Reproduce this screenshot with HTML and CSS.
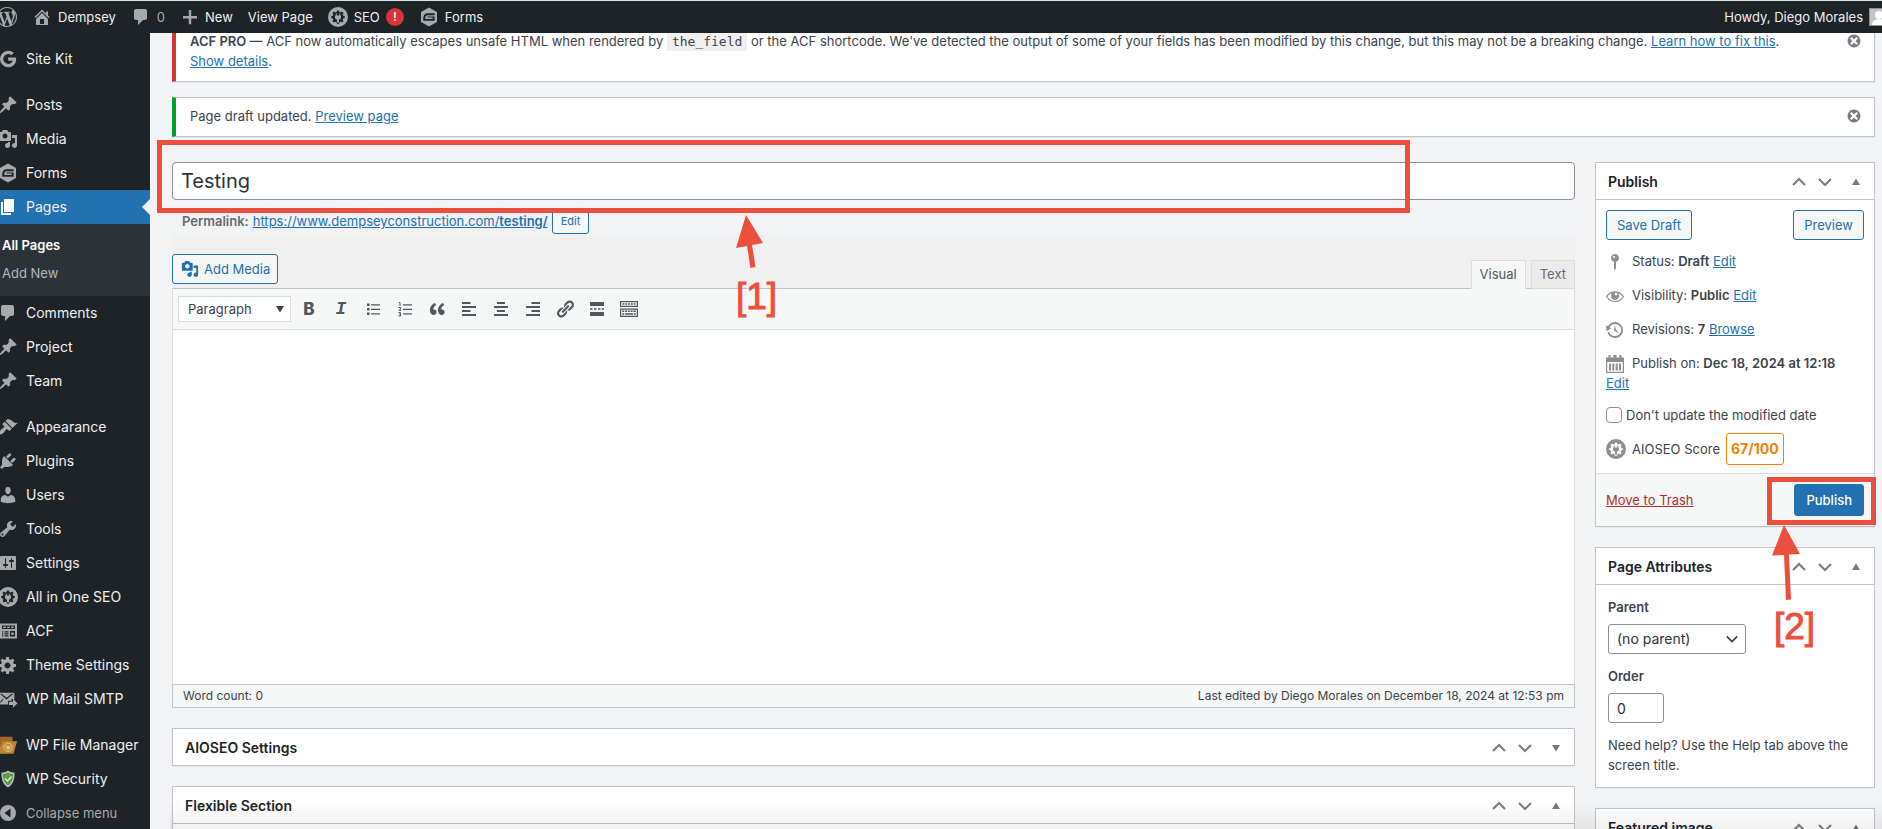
FILE: index.html
```html
<!DOCTYPE html>
<html lang="en">
<head>
<meta charset="utf-8">
<title>Edit Page - Dempsey</title>
<link rel="stylesheet" href="styles.css">
</head>
<body>
<svg class="sprite" aria-hidden="true">
  <symbol id="i-wp" viewBox="0 0 20 20"><path d="M20 10c0-5.51-4.49-10-10-10C4.48 0 0 4.49 0 10c0 5.52 4.48 10 10 10 5.51 0 10-4.48 10-10zM7.78 15.37L4.37 6.22c.55-.02 1.17-.08 1.17-.08.5-.06.44-1.13-.06-1.11 0 0-1.45.11-2.37.11-.18 0-.37 0-.58-.01C4.12 2.69 6.87 1.11 10 1.11c2.33 0 4.45.87 6.05 2.34-.68-.11-1.65.39-1.65 1.58 0 .74.45 1.36.9 2.1.35.61.55 1.36.55 2.46 0 1.49-1.4 5-1.4 5l-3.03-8.37c.54-.02.82-.17.82-.17.5-.05.44-1.25-.06-1.22 0 0-1.44.12-2.38.12-.87 0-2.33-.12-2.33-.12-.5-.03-.56 1.2-.06 1.22l.92.08 1.26 3.41zM17.41 10c.24-.64.74-1.87.43-4.25.7 1.29 1.05 2.71 1.05 4.25 0 3.29-1.73 6.24-4.4 7.78.97-2.59 1.94-5.2 2.92-7.78zM6.1 18.09C3.12 16.65 1.11 13.53 1.11 10c0-1.3.23-2.48.72-3.59C3.25 10.3 4.67 14.2 6.1 18.09zm4.03-6.63l2.58 6.98c-.86.29-1.76.45-2.71.45-.79 0-1.57-.11-2.29-.33.81-2.38 1.62-4.74 2.42-7.1z"/></symbol>
  <symbol id="i-home" viewBox="0 0 20 20"><path d="M16 8.5l1.53 1.53-1.06 1.06L10 4.6l-6.47 6.49-1.06-1.06L10 2.5l4 4v-2h2v4zm-6-2.46l6 5.99V18H4v-5.97zM12 17v-5H8v5h4z"/></symbol>
  <symbol id="i-comment" viewBox="0 0 20 20"><path d="M5 2h9c1.1 0 2 .9 2 2v7c0 1.1-.9 2-2 2h-2l-5 5v-5H5c-1.1 0-2-.9-2-2V4c0-1.1.9-2 2-2z"/></symbol>
  <symbol id="i-plus" viewBox="0 0 20 20"><path d="M17 9v2.400h-5.800v5.800H8.800v-5.800H3V9h5.800V3h2.400v6z"/></symbol>
  <symbol id="i-seo" viewBox="0 0 20 20"><path fill-rule="evenodd" d="M10 0a10 10 0 1 0 0 20 10 10 0 0 0 0-20zM9 3.400h2l.4 1.500 1.300.5 1.400-.8 1.400 1.400-.8 1.400.5 1.300 1.500.4v2l-1.500.4-.5 1.300.8 1.400-1.400 1.400-1.400-.8-1.300.5-.4 1.500H9l-.4-1.500-1.300-.5-1.400.8-1.400-1.400.8-1.400-.5-1.300-1.500-.4v-2l1.500-.4.5-1.300-.8-1.400 1.400-1.400 1.400.8 1.300-.5z"/><path d="M7.800 6.500h1v2h2.400v-2h1v2h.8v1.800c0 1.300-.8 2.100-2 2.400V15.500H9V12.700c-1.200-.3-2-1.100-2-2.400V8.500h.8z"/></symbol>
  <symbol id="i-gform" viewBox="0 0 20 20"><path fill-rule="evenodd" d="M10 .6l8 4.400v10l-8 4.400-8-4.400V5zM8.500 6.200c-2.700 0-4.300 2-4.300 5.500v2h11.400V9.400h-1.900v2.500H6.200c.1-2.400.8-3.700 2.400-3.700h7V6.200zM8.600 9.400h5.100v1H8.600z"/></symbol>
  <symbol id="i-google" viewBox="0 0 20 20"><path d="M18.100 8.400H10.200v3.400h4.500c-.5 2-2.100 3.100-4.500 3.100a4.900 4.900 0 1 1 3.200-8.600l2.500-2.500A8.300 8.300 0 1 0 10.200 18.300c4.900 0 8.500-3.500 7.900-9.900z"/></symbol>
  <symbol id="i-pin" viewBox="0 0 20 20"><path d="M10.44 3.02l1.82-1.82 6.36 6.35-1.83 1.82c-1.05-.68-2.48-.57-3.41.36l-.75.75c-.92.93-1.04 2.35-.35 3.41l-1.83 1.82-2.41-2.41-2.8 2.79c-.42.42-3.38 2.71-3.8 2.29s1.86-3.39 2.28-3.81l2.79-2.79L4.100 9.360l1.83-1.82c1.05.69 2.48.57 3.4-.36l.75-.75c.93-.92 1.05-2.35.36-3.41z"/></symbol>
  <symbol id="i-media" viewBox="0 0 20 20"><path fill-rule="evenodd" d="M13 11V4c0-.55-.45-1-1-1h-1.670L9 1H5L3.670 3H2c-.55 0-1 .45-1 1v7c0 .55.45 1 1 1h10c.55 0 1-.45 1-1zM7 4.500c1.380 0 2.500 1.120 2.500 2.500S8.380 9.500 7 9.500 4.500 8.380 4.500 7 5.620 4.500 7 4.500z"/><path d="M14 6h5v10.500c0 1.380-1.120 2.500-2.500 2.500S14 17.880 14 16.500s1.120-2.500 2.500-2.500c.17 0 .34.02.5.05V9h-3V6zm-4 8.050V13h2v3.500c0 1.380-1.120 2.500-2.500 2.500S7 17.880 7 16.500 8.120 14 9.500 14c.17 0 .34.02.5.05z"/></symbol>
  <symbol id="i-page" viewBox="0 0 20 20"><path d="M6 15V2h10v13H6zm-1 1h8v2H3V5h2v11z"/></symbol>
  <symbol id="i-brush" viewBox="0 0 20 20"><path d="M14.480 11.060L7.410 3.990l1.500-1.500c.5-.56 2.300-.47 3.510.32 1.210.8 1.430 1.280 2.910 2.100 1.180.64 2.450 1.260 4.450.85zm-.71.71L6.700 4.700 4.930 6.470c-.39.39-.39 1.020 0 1.410l1.060 1.060c.39.39.39 1.030 0 1.420-.6.6-1.430 1.110-2.210 1.690-.35.26-.7.53-1.010.84C1.430 14.230.4 16.080 1.400 17.070c.99 1 2.840-.03 4.180-1.360.31-.31.58-.66.85-1.020.57-.78 1.080-1.610 1.690-2.210.39-.39 1.020-.39 1.410 0l1.060 1.060c.39.39 1.020.39 1.410 0z"/></symbol>
  <symbol id="i-plug" viewBox="0 0 20 20"><path d="M13.110 4.360L9.870 7.600 8 5.730l3.240-3.240c.35-.34 1.050-.2 1.560.32.52.51.66 1.210.31 1.550zm-8 1.770l.91-1.120 9.010 9.010-1.190.84c-.71.71-2.630 1.160-3.820 1.160H6.140L4.900 17.260c-.59.59-1.540.59-2.120 0-.59-.58-.59-1.530 0-2.120l1.240-1.240v-3.880c0-1.130.4-3.190 1.090-3.890zm7.260 3.970l3.240-3.240c.34-.35 1.040-.21 1.550.31.52.51.66 1.210.31 1.550l-3.240 3.250z"/></symbol>
  <symbol id="i-user" viewBox="0 0 20 20"><path d="M10 9.250c-2.270 0-2.730-3.440-2.730-3.440C7 4.020 7.820 2 9.970 2c2.160 0 2.980 2.020 2.710 3.810 0 0-.41 3.440-2.680 3.440zm0 2.570L12.720 10c2.390 0 4.520 2.330 4.520 4.530v2.490s-3.650 1.130-7.240 1.130c-3.650 0-7.240-1.130-7.240-1.130v-2.490c0-2.250 1.940-4.480 4.470-4.480z"/></symbol>
  <symbol id="i-tool" viewBox="0 0 20 20"><path fill-rule="evenodd" d="M16.680 9.770c-1.340 1.340-3.300 1.670-4.950.99l-5.410 6.520c-.99.99-2.590.99-3.580 0s-.99-2.590 0-3.570l6.520-5.420c-.68-1.650-.35-3.610.99-4.950 1.280-1.280 3.120-1.620 4.720-1.060l-2.890 2.890 2.820 2.820 2.860-2.870c.53 1.580.18 3.390-1.080 4.650zM3.810 16.210c.4.39 1.040.39 1.430 0 .4-.4.4-1.040 0-1.430-.39-.4-1.030-.4-1.430 0-.39.39-.39 1.030 0 1.430z"/></symbol>
  <symbol id="i-sliders" viewBox="0 0 20 20"><path fill-rule="evenodd" d="M18 16V4c0-.55-.45-1-1-1H3c-.55 0-1 .45-1 1v12c0 .55.45 1 1 1h14c.55 0 1-.45 1-1zM8 11h1c.55 0 1 .45 1 1s-.45 1-1 1H8v1.500c0 .28-.22.5-.5.5s-.5-.22-.5-.5V13H6c-.55 0-1-.45-1-1s.45-1 1-1h1V5.500c0-.28.22-.5.5-.5s.5.22.5.5V11zm5-2h-1c-.55 0-1-.45-1-1s.45-1 1-1h1V5.500c0-.28.22-.5.5-.5s.5.22.5.5V7h1c.55 0 1 .45 1 1s-.45 1-1 1h-1v5.500c0 .28-.22.5-.5.5s-.5-.22-.5-.5V9z"/></symbol>
  <symbol id="i-acf" viewBox="0 0 20 20"><path fill-rule="evenodd" d="M2 2.500h17v15H2zM4 4.500v3.600h13V4.500zM12 10v5.500h5V10zM4 10.200v1.300h1.300v-1.300zm2.500 0v1.300H10.500v-1.300zM4 12.200v1.300h1.300v-1.300zm2.500 0v1.300H10.500v-1.300zM4 14.200v1.300h1.300v-1.300zm2.500 0v1.300H10.500v-1.300z"/><path d="M5.200 5.500h2.600v1.600H5.200zM9.200 5.500h2.600v1.600H9.200zM13.200 5.500h2.600v1.600h-2.600zM13.300 11.400h2.400v2.700h-2.400z"/></symbol>
  <symbol id="i-gear" viewBox="0 0 20 20"><path fill-rule="evenodd" d="M18 12h-2.180c-.17.7-.44 1.350-.81 1.930l1.540 1.540-2.100 2.100-1.540-1.540c-.58.36-1.230.63-1.910.79V19H8v-2.180c-.68-.16-1.330-.43-1.910-.79l-1.540 1.540-2.120-2.120 1.540-1.540c-.36-.58-.63-1.230-.79-1.910H1V9.030h2.170c.16-.7.44-1.350.8-1.940L2.430 5.550l2.100-2.100 1.540 1.540c.58-.37 1.240-.64 1.930-.81V2h3v2.180c.68.16 1.330.43 1.910.79l1.540-1.540 2.120 2.120-1.540 1.540c.36.59.64 1.240.8 1.940H18V12zm-8.500 1.500c1.660 0 3-1.340 3-3s-1.340-3-3-3-3 1.340-3 3 1.340 3 3 3z"/></symbol>
  <symbol id="i-mail" viewBox="0 0 22 20"><path fill-rule="evenodd" d="M1 3h17v8l-3-1.500v2.500h-4v4H1zM2.600 4.800l6.900 5.700 6.900-5.700-.9-.8-6 4.500L3.500 4zM2.500 14.500l3.500-4-.8-.7-2.700 3.200z"/><path d="M12 13h4.500v-3l5 4.800-5 4.700v-3H12z"/></symbol>
  <symbol id="i-folder" viewBox="0 0 22 20"><path fill="#a8642a" d="M0 1h16v4l-5 14H0z"/><path fill="#bd862c" d="M5 6h16l-4 13.500H0V17z"/><circle cx="11" cy="12.500" r="4.500" fill="none" stroke="#e2c795"/><path fill="none" stroke="#e2c795" stroke-width="1.200" d="M8.500 10.500l1.500 4 1-3.500 1.200 3.500 1.500-4"/></symbol>
  <symbol id="i-shield" viewBox="0 0 20 20"><path fill="#b4bfc9" d="M10 1.500c2 1.500 4 2 6.500 2 .3 7-1.500 12-6.500 15-5-3-6.800-8-6.500-15 2.500 0 4.500-.5 6.500-2z"/><path fill="#5a9a40" d="M10 3.500c1.500 1 3 1.500 5 1.600 0 5.400-1.400 9-5 11.400-3.600-2.400-5-6-5-11.400 2-.1 3.500-.6 5-1.600z"/><path fill="none" stroke="#dfe9d8" stroke-width="1.500" d="M7 9.500l2.500 2.500 4-4.500"/></symbol>
  <symbol id="i-collapse" viewBox="0 0 20 20"><path fill-rule="evenodd" d="M10 2a8 8 0 1 0 0 16 8 8 0 0 0 0-16zM12.500 5.500v9L6.500 10z"/></symbol>
  <symbol id="i-dismiss" viewBox="0 0 20 20"><path fill-rule="evenodd" d="M10 2c4.420 0 8 3.580 8 8s-3.580 8-8 8-8-3.580-8-8 3.580-8 8-8zm5 11l-3-3 3-3-2-2-3 3-3-3-2 2 3 3-3 3 2 2 3-3 3 3z"/></symbol>
  <symbol id="i-up" viewBox="0 0 16 16"><path fill="none" stroke="currentColor" stroke-width="2" d="M2 11l6-6 6 6"/></symbol>
  <symbol id="i-down" viewBox="0 0 16 16"><path fill="none" stroke="currentColor" stroke-width="2" d="M2 5l6 6 6-6"/></symbol>
  <symbol id="i-tri-up" viewBox="0 0 8 8"><path d="M0 7l4-6.500L8 7z"/></symbol>
  <symbol id="i-tri-down" viewBox="0 0 8 8"><path d="M0 1l4 6.500L8 1z"/></symbol>
  <symbol id="i-status" viewBox="0 0 20 20"><path fill-rule="evenodd" d="M14 6c0 1.860-1.280 3.410-3 3.860V16c0 1-2 2-2 2V9.860c-1.720-.45-3-2-3-3.860 0-2.210 1.790-4 4-4s4 1.790 4 4zM8 5c0 .55.45 1 1 1s1-.45 1-1-.45-1-1-1-1 .45-1 1z"/></symbol>
  <symbol id="i-eye" viewBox="0 0 20 20"><path fill-rule="evenodd" d="M18.300 9.500C15 4.900 8.500 3.800 3.900 7.200c-1.200.9-2.200 2.100-3 3.400.2.4.5.8.8 1.200 3.300 4.600 9.600 5.600 14.200 2.400.9-.7 1.700-1.400 2.400-2.400.3-.4.5-.8.8-1.200-.3-.4-.5-.8-.8-1.100zm-8.200-2.300c.5-.5 1.300-.5 1.800 0s.5 1.300 0 1.800-1.300.5-1.800 0-.5-1.300 0-1.800zm-.1 7.700c-3.100 0-6-1.600-7.700-4.200C3.500 9 5.100 7.800 7 7.200c-.7.8-1 1.700-1 2.700 0 2.200 1.700 4.100 4 4.100 2.200 0 4.100-1.700 4.100-4v-.1c0-1-.4-2-1.100-2.700 1.900.6 3.500 1.800 4.700 3.500-1.700 2.600-4.600 4.200-7.700 4.200z"/></symbol>
  <symbol id="i-history" viewBox="0 0 20 20"><path d="M13.650 2.880c3.930 2.010 5.480 6.840 3.470 10.770s-6.830 5.480-10.770 3.470c-1.870-.96-3.200-2.560-3.860-4.400l1.640-1.030c.45 1.570 1.520 2.950 3.080 3.760 3.010 1.540 6.690.35 8.230-2.660 1.550-3.010.36-6.690-2.650-8.240C9.780 3.010 6.100 4.200 4.560 7.210l1.880.97-4.950 3.080-.39-5.820 1.780.91C4.900 2.400 9.750.89 13.650 2.880zm-4.360 7.830C9.110 10.530 9 10.280 9 10c0-.07.03-.12.04-.19h-.01L10 5l.97 4.810L14 13l-4.500-2.120.02-.02c-.08-.04-.16-.09-.23-.15z"/></symbol>
  <symbol id="i-calendar" viewBox="0 0 20 20"><path fill-rule="evenodd" d="M1 3.500h2.500V1h2v2.500h3V1h3v2.500h3V1h2v2.500H19V19H1zM2.200 8v9.800h15.600V8z"/><path d="M4 9.500h2v7H4zM7.300 9.500h2v7h-2zM10.700 9.500h2v7h-2zM14 9.500h2v7h-2z"/></symbol>
  <symbol id="i-ul" viewBox="0 0 20 20"><path d="M4 4.500h2.500v2.500H4zM4 9h2.500v2.500H4zM4 13.500h2.500V16H4zM8 5.200h9v1.200H8zM8 9.700h9v1.200H8zM8 14.200h9v1.200H8z"/></symbol>
  <symbol id="i-ol" viewBox="0 0 20 20"><path d="M8 5.200h9v1.200H8zM8 9.700h9v1.200H8zM8 14.200h9v1.200H8z"/><path fill="none" stroke="currentColor" d="M4 3.500h1v3.500M3.500 8.500H5.500V10L4 11.500h2M3.500 13.500h2v3.500h-2M4 15.200h1.500"/></symbol>
  <symbol id="i-quote" viewBox="0 0 20 20"><path d="M9.490 13.220c0-.74-.2-1.380-.61-1.900-.62-.78-1.830-.88-2.530-.72-.29-1.650 1.110-3.750 2.920-4.650L7.880 4c-2.730 1.300-5.420 4.280-4.960 8.050C3.210 14.430 4.590 16 6.540 16c.85 0 1.560-.25 2.120-.75s.83-1.180.83-2.030zm8.050 0c0-.74-.2-1.380-.61-1.900-.63-.78-1.830-.88-2.530-.72-.29-1.650 1.110-3.750 2.920-4.650L15.930 4c-2.730 1.300-5.410 4.280-4.950 8.050.29 2.380 1.660 3.950 3.610 3.950.85 0 1.560-.25 2.120-.75s.83-1.180.83-2.030z"/></symbol>
  <symbol id="i-left" viewBox="0 0 20 20"><path d="M3 3h8.500v2H3zM3 7h14v2H3zM3 11h8.500v2H3zM3 15h14v2H3z"/></symbol>
  <symbol id="i-center" viewBox="0 0 20 20"><path d="M6 3h8v2H6zM3 7h14v2H3zM6 11h8v2H6zM3 15h14v2H3z"/></symbol>
  <symbol id="i-right" viewBox="0 0 20 20"><path d="M8.500 3H17v2H8.500zM3 7h14v2H3zM8.500 11H17v2H8.500zM3 15h14v2H3z"/></symbol>
  <symbol id="i-link" viewBox="0 0 20 20"><path fill-rule="evenodd" d="M17.740 2.760c1.680 1.690 1.680 4.410 0 6.100l-1.530 1.520c-1.120 1.120-2.700 1.470-4.140 1.090l2.620-2.610.76-.77.76-.76c.84-.84.84-2.200 0-3.040-.84-.85-2.200-.85-3.040 0l-.77.76-3.380 3.380c-.37-1.440-.02-3.020 1.100-4.140l1.520-1.530c1.690-1.680 4.420-1.680 6.100 0zM8.590 13.430l5.340-5.340c.42-.42.42-1.100 0-1.520-.44-.43-1.130-.39-1.530 0l-5.330 5.340c-.42.42-.42 1.100 0 1.520.44.43 1.130.39 1.520 0zm-.76 2.290l4.140-4.150c.38 1.440.03 3.020-1.090 4.140l-1.520 1.530c-1.690 1.680-4.410 1.680-6.100 0-1.680-1.680-1.680-4.420 0-6.100l1.530-1.520c1.120-1.120 2.700-1.470 4.140-1.100l-4.140 4.150c-.85.84-.85 2.200 0 3.050.84.84 2.200.84 3.040 0z"/></symbol>
  <symbol id="i-more" viewBox="0 0 20 20"><path d="M3 3h14v4H3zM3 9.200h2.500v1.600H3zM7 9.200h2.500v1.600H7zM11 9.200h2.500v1.600H11zM14.800 9.200H17v1.600h-2.200zM3 13h14v4H3z"/></symbol>
  <symbol id="i-keys" viewBox="0 0 20 20"><path fill-rule="evenodd" d="M1 2h18v6H1zM2.200 3.200v3.600h15.600V3.200zM1 9.500h18V18H1zM2.200 10.700v6.100h15.600v-6.100z"/><path d="M3.500 4.200h1.800v1.600H3.500zM6.300 4.200h1.800v1.600H6.300zM9.100 4.200h1.800v1.600H9.100zM11.900 4.200h1.800v1.600h-1.800zM14.700 4.200h1.800v1.600h-1.800zM3.200 11.500h2v1.600h-2zM6 11.500h2v1.600H6zM8.800 11.500h2v1.600h-2zM11.600 11.500h2v1.600h-2zM14.400 11.500h2.400v1.600h-2.400zM3.200 14.200h2v1.600h-2zM6 14.200h8v1.600H6zM14.800 14.200h2v1.600h-2z"/></symbol>
</svg>

<header class="bar">
  <a class="bar-item bar-logo" href="#" aria-label="About WordPress"><svg><use href="#i-wp"/></svg></a>
  <a class="bar-item" href="#"><svg><use href="#i-home"/></svg>Dempsey</a>
  <a class="bar-item bar-count" href="#"><svg><use href="#i-comment"/></svg>0</a>
  <a class="bar-item bar-new" href="#"><svg><use href="#i-plus"/></svg>New</a>
  <a class="bar-item" href="#">View Page</a>
  <a class="bar-item" href="#"><svg><use href="#i-seo"/></svg>SEO<span class="alert">!</span></a>
  <a class="bar-item" href="#"><svg><use href="#i-gform"/></svg>Forms</a>
  <a class="bar-item bar-user" href="#">Howdy, Diego Morales
    <span class="avatar"><svg viewBox="0 0 16 16"><circle cx="9" cy="6" r="4"/><path d="M2 16c0-4 3-6 7-6s7 2 7 6z"/></svg></span></a>
</header>

<div class="layout">
<nav class="side" aria-label="Main menu">
  <a class="side-link" href="#"><svg><use href="#i-google"/></svg>Site Kit</a>
  <a class="side-link split" href="#"><svg><use href="#i-pin"/></svg>Posts</a>
  <a class="side-link" href="#"><svg><use href="#i-media"/></svg>Media</a>
  <a class="side-link" href="#"><svg><use href="#i-gform"/></svg>Forms</a>
  <a class="side-link current" href="#"><svg><use href="#i-page"/></svg>Pages</a>
  <div class="submenu">
    <a class="on" href="#">All Pages</a>
    <a href="#">Add New</a>
  </div>
  <a class="side-link" href="#"><svg><use href="#i-comment"/></svg>Comments</a>
  <a class="side-link" href="#"><svg><use href="#i-pin"/></svg>Project</a>
  <a class="side-link" href="#"><svg><use href="#i-pin"/></svg>Team</a>
  <a class="side-link split" href="#"><svg><use href="#i-brush"/></svg>Appearance</a>
  <a class="side-link" href="#"><svg><use href="#i-plug"/></svg>Plugins</a>
  <a class="side-link" href="#"><svg><use href="#i-user"/></svg>Users</a>
  <a class="side-link" href="#"><svg><use href="#i-tool"/></svg>Tools</a>
  <a class="side-link" href="#"><svg><use href="#i-sliders"/></svg>Settings</a>
  <a class="side-link" href="#"><svg><use href="#i-seo"/></svg>All in One SEO</a>
  <a class="side-link" href="#"><svg><use href="#i-acf"/></svg>ACF</a>
  <a class="side-link" href="#"><svg><use href="#i-gear"/></svg>Theme Settings</a>
  <a class="side-link" href="#"><svg><use href="#i-mail"/></svg>WP Mail SMTP</a>
  <a class="side-link split" href="#"><svg><use href="#i-folder"/></svg>WP File Manager</a>
  <a class="side-link" href="#"><svg><use href="#i-shield"/></svg>WP Security</a>
  <button class="side-link collapse" type="button"><svg><use href="#i-collapse"/></svg>Collapse menu</button>
</nav>

<main class="main">
  <div class="notice error">
    <p><strong>ACF PRO —</strong> ACF now automatically escapes unsafe HTML when rendered by <code>the_field</code> or the ACF shortcode. We've detected the output of some of your fields has been modified by this change, but this may not be a breaking change. <a href="#">Learn how to fix this</a>.<br><a href="#">Show details</a>.</p>
    <button class="dismiss" type="button" aria-label="Dismiss"><svg><use href="#i-dismiss"/></svg></button>
  </div>
  <div class="notice success">
    <p>Page draft updated. <a href="#">Preview page</a></p>
    <button class="dismiss" type="button" aria-label="Dismiss"><svg><use href="#i-dismiss"/></svg></button>
  </div>

  <div class="columns">
    <div class="col-main">
      <input class="title" type="text" value="Testing" aria-label="Title">
      <div class="permalink"><strong>Permalink:</strong> <a href="#">https://www.dempseyconstruction.com/<b>testing/</b></a><button class="btn btn-small" type="button">Edit</button></div>
      <section class="editor">
        <div class="editor-top">
          <button class="btn add-media" type="button"><svg><use href="#i-media"/></svg>Add Media</button>
          <div class="tabs">
            <button class="tab active" type="button">Visual</button>
            <button class="tab" type="button">Text</button>
          </div>
        </div>
        <div class="toolbar">
          <button class="format" type="button">Paragraph<svg><use href="#i-tri-down"/></svg></button>
          <button class="tool bold" type="button">B</button>
          <button class="tool italic" type="button">I</button>
          <button class="tool" type="button" aria-label="Bulleted list"><svg><use href="#i-ul"/></svg></button>
          <button class="tool" type="button" aria-label="Numbered list"><svg><use href="#i-ol"/></svg></button>
          <button class="tool" type="button" aria-label="Blockquote"><svg><use href="#i-quote"/></svg></button>
          <button class="tool" type="button" aria-label="Align left"><svg><use href="#i-left"/></svg></button>
          <button class="tool" type="button" aria-label="Align center"><svg><use href="#i-center"/></svg></button>
          <button class="tool" type="button" aria-label="Align right"><svg><use href="#i-right"/></svg></button>
          <button class="tool" type="button" aria-label="Link"><svg><use href="#i-link"/></svg></button>
          <button class="tool" type="button" aria-label="Read more"><svg><use href="#i-more"/></svg></button>
          <button class="tool" type="button" aria-label="Toolbar toggle"><svg><use href="#i-keys"/></svg></button>
        </div>
        <textarea class="canvas" aria-label="Content"></textarea>
        <div class="status"><span>Word count: 0</span><span>Last edited by Diego Morales on December 18, 2024 at 12:53 pm</span></div>
      </section>
      <section class="box closed">
        <div class="box-head"><h2>AIOSEO Settings</h2>
          <button type="button" aria-label="Move up"><svg><use href="#i-up"/></svg></button><button type="button" aria-label="Move down"><svg><use href="#i-down"/></svg></button><button class="toggle" type="button" aria-label="Toggle"><svg><use href="#i-tri-down"/></svg></button></div>
      </section>
      <section class="box">
        <div class="box-head"><h2>Flexible Section</h2>
          <button type="button" aria-label="Move up"><svg><use href="#i-up"/></svg></button><button type="button" aria-label="Move down"><svg><use href="#i-down"/></svg></button><button class="toggle" type="button" aria-label="Toggle"><svg><use href="#i-tri-up"/></svg></button></div>
        <div class="box-body"></div>
      </section>
    </div>

    <aside class="col-side">
      <section class="box">
        <div class="box-head"><h2>Publish</h2>
          <button type="button" aria-label="Move up"><svg><use href="#i-up"/></svg></button><button type="button" aria-label="Move down"><svg><use href="#i-down"/></svg></button><button class="toggle" type="button" aria-label="Toggle"><svg><use href="#i-tri-up"/></svg></button></div>
        <div class="publish">
          <div class="actions"><button class="btn" type="button">Save Draft</button><button class="btn" type="button">Preview</button></div>
          <ul class="facts">
            <li><svg><use href="#i-status"/></svg>Status: <strong>Draft</strong> <a href="#">Edit</a></li>
            <li><svg><use href="#i-eye"/></svg>Visibility: <strong>Public</strong> <a href="#">Edit</a></li>
            <li><svg><use href="#i-history"/></svg>Revisions: <strong>7</strong> <a href="#">Browse</a></li>
            <li><svg><use href="#i-calendar"/></svg>Publish on: <strong>Dec 18, 2024 at 12:18</strong><br><a href="#">Edit</a></li>
          </ul>
          <label class="check"><input type="checkbox">Don't update the modified date</label>
          <div class="score"><svg><use href="#i-seo"/></svg>AIOSEO Score<a href="#">67/100</a></div>
        </div>
        <div class="box-foot"><a href="#">Move to Trash</a><button class="btn primary" type="button">Publish</button></div>
      </section>
      <section class="box">
        <div class="box-head"><h2>Page Attributes</h2>
          <button type="button" aria-label="Move up"><svg><use href="#i-up"/></svg></button><button type="button" aria-label="Move down"><svg><use href="#i-down"/></svg></button><button class="toggle" type="button" aria-label="Toggle"><svg><use href="#i-tri-up"/></svg></button></div>
        <div class="attrs">
          <label for="parent">Parent</label>
          <div class="select-wrap"><select id="parent"><option>(no parent)</option></select><svg><use href="#i-down"/></svg></div>
          <label for="order">Order</label>
          <input id="order" type="text" value="0">
          <p>Need help? Use the Help tab above the screen title.</p>
        </div>
      </section>
      <section class="box">
        <div class="box-head"><h2>Featured image</h2>
          <button type="button" aria-label="Move up"><svg><use href="#i-up"/></svg></button><button type="button" aria-label="Move down"><svg><use href="#i-down"/></svg></button><button class="toggle" type="button" aria-label="Toggle"><svg><use href="#i-tri-up"/></svg></button></div>
      </section>
    </aside>
  </div>
</main>
</div>

<div class="edge-shade"></div>
<div class="mark mark-title"></div>
<svg class="arrow arrow-title" viewBox="0 0 28 54"><path d="M10 0l17 28-11 2 3.500 22-5 1L11 31 0 33z"/></svg>
<span class="step step-title">[1]</span>
<div class="mark mark-publish"></div>
<svg class="arrow arrow-publish" viewBox="0 0 28 76"><path d="M12 0l16 29-11 .5 2 45-5 .5-2-45-12 .5z"/></svg>
<span class="step step-publish">[2]</span>
</body>
</html>
```
FILE: styles.css
```css
* { box-sizing: border-box; }
html, body { height: 100%; }
body {
  margin: 0;
  overflow: hidden;
  position: relative;
  background: #f2f3f5;
  color: #3c434a;
  font: 13px/20px Inter, "Liberation Sans", sans-serif;
}
a { color: #2271b1; }
p, h2, ul { margin: 0; padding: 0; }
button, input, select, textarea { font: inherit; color: inherit; margin: 0; }
button { padding: 0; border: 0; background: none; }
svg { fill: currentColor; flex: none; }
strong, b { font-weight: 600; }
.sprite { position: absolute; width: 0; height: 0; }

/* Admin bar */
.bar {
  position: relative;
  z-index: 2;
  height: 33px;
  display: flex;
  align-items: center;
  gap: 15px;
  overflow: hidden;
  background: #1d2327;
  border-top: 1px solid #dce5df;
}
.bar-item {
  display: flex;
  align-items: center;
  gap: 6px;
  color: #f0f0f1;
  text-decoration: none;
  white-space: nowrap;
}
.bar svg { width: 20px; height: 20px; color: #a7aaad; }
.bar-logo { margin-left: -3px; }
.bar-count { color: #a7aaad; }
.bar-new { gap: 5px; }
.alert {
  width: 18px;
  height: 18px;
  border-radius: 50%;
  background: #d63638;
  text-align: center;
  line-height: 18px;
  font-size: 12px;
  font-weight: 600;
}
.bar-user { margin-left: auto; margin-right: -5px; }
.avatar { width: 18px; height: 18px; border: 1px solid #8c8f94; background: #c3c4c7; overflow: hidden; }
.avatar svg { display: block; width: 16px; height: 16px; color: #fff; }

/* Side menu */
.layout { display: flex; height: calc(100% - 33px); }
.side {
  flex: none;
  width: 150px;
  padding-top: 9px;
  background: #1d2327;
  overflow: hidden;
}
.side-link {
  position: relative;
  display: flex;
  align-items: center;
  gap: 8px;
  width: 100%;
  height: 34px;
  color: #f0f0f1;
  font-size: 14px;
  text-decoration: none;
  white-space: nowrap;
}
.side-link svg { width: 20px; height: 20px; margin-left: -2px; color: #a7aaad; }
.split { margin-top: 12px; }
.current { background: #2271b1; }
.current svg { color: #fff; }
.current::after {
  content: "";
  position: absolute;
  right: 0;
  top: 9px;
  border: 8px solid transparent;
  border-left-width: 0;
  border-right-color: #f2f3f5;
}
.submenu { height: 72px; padding: 7px 2px; background: #2c3338; }
.submenu a { display: block; line-height: 28px; color: #b4b9be; text-decoration: none; }
.submenu .on { color: #fff; font-weight: 600; }
.collapse { color: #a7aaad; font-size: 13px; }

/* Notices */
.main { flex: 1; min-width: 0; margin-top: -13px; padding: 0 7px 0 22px; }
.notice {
  display: flex;
  justify-content: space-between;
  align-items: flex-start;
  margin-bottom: 15px;
  padding: 8px 12px 10px 14px;
  background: #fff;
  border: 1px solid #c3c4c7;
  border-left: 4px solid #d63638;
  box-shadow: 0 1px 1px rgba(0, 0, 0, .04);
}
.error { padding-top: 10px; }
.success { border-left-color: #00a32a; }
.notice code {
  padding: 3px 5px 2px;
  background: #f0f0f1;
  font: 13px/16px "DejaVu Sans Mono", monospace;
}
.dismiss { height: 20px; color: #787c82; }
.dismiss svg { display: block; width: 16px; height: 20px; }

/* Columns */
.columns { display: flex; gap: 20px; margin-top: 25px; }
.col-main { flex: 1; min-width: 0; }
.col-side { flex: none; width: 280px; }
.title {
  display: block;
  width: 100%;
  height: 38px;
  padding: 0 8px;
  border: 1px solid #8c8f94;
  border-radius: 4px;
  background: #fff;
  color: #2c3338;
  font-size: 20px;
}
.permalink { display: flex; gap: 4px; align-items: center; height: 25px; margin-top: 9px; padding: 0 0 1px 10px; color: #646970; }
.btn {
  height: 30px;
  padding: 0 10px;
  border: 1px solid #2271b1;
  border-radius: 3px;
  background: #f6f7f7;
  color: #2271b1;
}
.btn-small { height: 25px; padding: 0 8px; font-size: 11px; }

/* Editor */
.editor { background: #f0f0f0; margin-bottom: 20px; }
.editor-top { display: flex; justify-content: space-between; align-items: flex-end; height: 54px; }
.add-media { display: flex; align-items: center; gap: 5px; margin-bottom: 4px; padding: 0 7px 0 8px; }
.add-media svg { width: 18px; height: 18px; }
.tabs { display: flex; gap: 5px; margin-bottom: -1px; }
.tab { height: 29px; padding: 0 8px 2px; border: 1px solid #dcdcde; background: #ebebeb; color: #646970; }
.tab.active { background: #f6f7f7; border-bottom-color: #f6f7f7; color: #50575e; position: relative; }
.toolbar {
  display: flex;
  align-items: center;
  height: 42px;
  padding-left: 5px;
  background: #f6f7f7;
  border: 1px solid #dcdcde;
  border-top-color: #c3c4c7;
}
.format {
  display: flex;
  align-items: center;
  justify-content: space-between;
  width: 113px;
  height: 26px;
  margin-right: 2px;
  padding: 0 6px 0 9px;
  border: 1px solid #dcdcde;
  background: #fff;
}
.format svg { width: 8px; height: 8px; }
.tool { display: flex; justify-content: center; width: 32px; color: #50575e; }
.tool svg { width: 20px; height: 20px; }
.bold { font-size: 17px; font-weight: 800; }
.italic { font: italic 700 18px/20px "Liberation Mono", monospace; }
.canvas {
  display: block;
  width: 100%;
  height: 354px;
  border: 1px solid #dcdcde;
  border-width: 0 1px;
  background: #fff;
  resize: none;
}
.status {
  display: flex;
  justify-content: space-between;
  padding: 0 10px;
  border: 1px solid #c3c4c7;
  background: #f6f7f7;
  font-size: 12px;
  line-height: 22px;
}

/* Boxes */
.box { margin-bottom: 20px; background: #fff; border: 1px solid #c3c4c7; box-shadow: 0 1px 1px rgba(0, 0, 0, .04); }
.box-head { display: flex; align-items: center; height: 37px; padding: 1px 8px 0 12px; border-bottom: 1px solid #c3c4c7; color: #787c82; }
.closed .box-head { height: 36px; border-bottom: 0; }
.box-head h2 { flex: 1; color: #1d2327; font-size: 14px; font-weight: 600; }
.box-head button { display: flex; justify-content: center; width: 26px; }
.box-head svg { width: 16px; height: 16px; }
.box-head .toggle { width: 20px; margin-left: 8px; }
.box-head .toggle svg { width: 8px; height: 8px; }
.box-body { height: 100px; }
.publish { padding: 10px 10px 8px; }
.actions { display: flex; justify-content: space-between; margin-bottom: 4px; }
.facts { list-style: none; }
.facts li { padding: 7px 0; }
.facts svg { width: 20px; height: 20px; margin: -3px 7px -3px -1px; vertical-align: middle; color: #8c8f94; }
.check { display: flex; align-items: center; gap: 4px; margin: 5px 0 8px; }
.check input { appearance: none; width: 16px; height: 16px; border: 1px solid #8c8f94; border-radius: 4px; background: #fff; }
.score { display: flex; align-items: center; height: 32px; gap: 6px; }
.score svg { width: 20px; height: 20px; color: #8c8f94; }
.score a {
  padding: 5px 4px;
  border: 1px solid #f18200;
  border-radius: 3px;
  color: #f18200;
  font-size: 14px;
  font-weight: 700;
  text-decoration: none;
}
.box-foot { display: flex; justify-content: space-between; align-items: center; padding: 10px; border-top: 1px solid #dcdcde; background: #f6f7f7; }
.box-foot a { color: #b32d2e; }
.primary { height: 32px; padding: 0 11px; background: #2271b1; color: #fff; font-weight: 500; }
.attrs { padding: 12px; }
.attrs label { display: block; font-weight: 600; margin-bottom: 7px; }
.select-wrap { position: relative; width: 138px; margin-bottom: 12px; }
.attrs select, .attrs input {
  display: block;
  width: 100%;
  height: 30px;
  padding: 0 8px;
  border: 1px solid #8c8f94;
  border-radius: 3px;
  background: #fff;
  color: #2c3338;
  font-size: 14px;
  appearance: none;
}
.attrs input { width: 56px; margin-bottom: 12px; }
.select-wrap svg { position: absolute; right: 7px; top: 8px; width: 14px; height: 14px; }

/* Annotations */
.edge-shade {
  position: absolute;
  left: 170px;
  right: 0;
  bottom: 0;
  height: 28px;
  background: linear-gradient(transparent, rgba(0, 0, 0, .06));
}
.mark { position: absolute; z-index: 3; border: 5px solid #ed4f3e; }
.mark-title { left: 157px; top: 140px; width: 1253px; height: 73px; }
.mark-publish { left: 1767px; top: 477px; width: 109px; height: 48px; }
.arrow { position: absolute; z-index: 3; width: 28px; color: #ed4f3e; }
.arrow-title { left: 736px; top: 215px; height: 54px; }
.arrow-publish { left: 1772px; top: 525px; height: 76px; }
.step { position: absolute; z-index: 3; color: #ed4f3e; font: 37px/40px "Liberation Sans", sans-serif; -webkit-text-stroke: 1px #ed4f3e; }
.step-title { left: 736px; top: 277px; }
.step-publish { left: 1774px; top: 607px; }
```
